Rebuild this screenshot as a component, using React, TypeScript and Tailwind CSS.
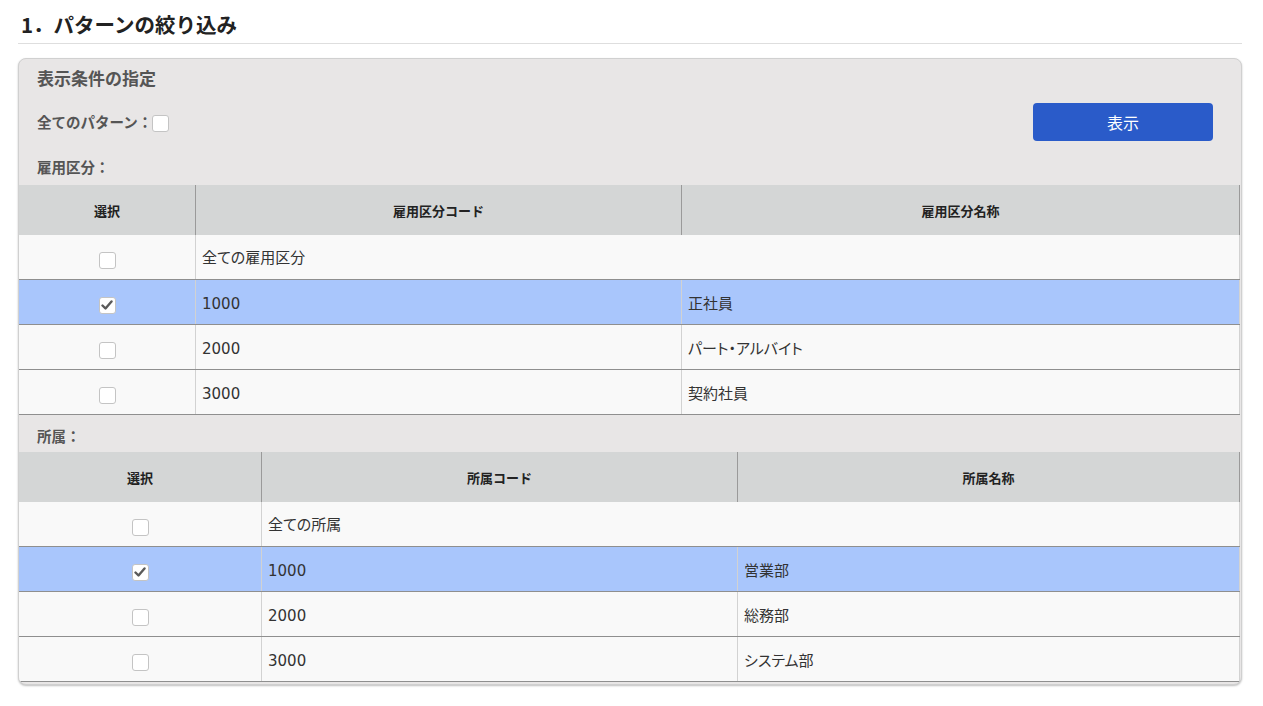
import React from "react";

const font = { fontFamily: '"Noto Sans CJK JP", "Noto Sans", sans-serif' };
const cellFont = { fontFamily: '"DejaVu Sans", "Noto Sans CJK JP", sans-serif' };

function Checkbox({ checked }: { checked?: boolean }) {
  return (
    <span className="inline-flex h-[17px] w-[17px] items-center justify-center rounded-[3px] border border-[#c4c4c4] bg-white">
      {checked && (
        <svg width="12" height="10" viewBox="0 0 12 10">
          <path d="M1.5 5.5 L4.5 8.5 L10.5 1.5" fill="none" stroke="#5a5a5a" strokeWidth="2.4" strokeLinejoin="round" strokeLinecap="round" />
        </svg>
      )}
    </span>
  );
}

type Row = { code: string; name: string; checked?: boolean; all?: boolean };

function DataTable({
  cols,
  headers,
  rows,
}: {
  cols: string;
  headers: string[];
  rows: Row[];
}) {
  return (
    <div className="mr-[1px]">
      <div className={`grid ${cols} h-[50px] bg-[#d4d6d6]`}>
        {headers.map((h, i) => (
          <div
            key={i}
            className={`flex items-center justify-center pt-[1px] text-[13px] font-bold text-[#222] ${
              i > 0 ? "border-l border-[#9a9a9a]" : ""
            } ${i === headers.length - 1 ? "border-r border-[#9a9a9a]" : ""}`}
          >
            {h}
          </div>
        ))}
      </div>
      {rows.map((r, i) => (
        <div
          key={i}
          className={`grid ${cols} h-[45px] border-b border-[#8f8f8f] ${
            r.checked ? "bg-[#a9c6fc]" : "bg-[#f9f9f9]"
          }`}
        >
          <div className="flex items-center justify-center pt-[6px]">
            <Checkbox checked={r.checked} />
          </div>
          {r.all ? (
            <div
              className="col-span-2 flex items-center border-l border-r border-[#d2d2d2] pl-[6px] pt-[3px] text-[15px] text-[#333] [font-feature-settings:'palt']"
              style={cellFont}
            >
              {r.code}
            </div>
          ) : (
            <>
              <div
                className="flex items-center border-l border-[#d2d2d2] pl-[6px] pt-[5px] text-[15px] text-[#333]"
                style={cellFont}
              >
                {r.code}
              </div>
              <div
                className="flex items-center border-l border-r border-[#d2d2d2] pl-[6px] pt-[4px] text-[15px] text-[#333] [font-feature-settings:'palt']"
                style={cellFont}
              >
                {r.name}
              </div>
            </>
          )}
        </div>
      ))}
    </div>
  );
}

export default function App() {
  return (
    <div className="min-h-[706px] w-[1263px] bg-white" style={font}>
      <div className="w-[1242px] pl-[18px]">
        <div className="flex h-[44px] items-center border-b border-[#dedede] pl-[3px] pt-[6px]">
          <h1 className="text-[20.5px] font-bold text-[#222]">1．パターンの絞り込み</h1>
        </div>
        <div className="mt-[14px] overflow-hidden rounded-[8px] border border-[#d0d0d0] bg-[#e8e6e6] pb-[2px] shadow-[0_1px_2px_rgba(0,0,0,0.25)]">
          <div className="flex h-[37px] items-center pl-[18px] text-[17px] font-bold text-[#555]">
            表示条件の指定
          </div>
          <div className="mt-[7px] flex h-[38px] items-center justify-between">
            <div className="flex items-center pl-[18px] text-[14.5px] font-bold text-[#555]">
              全てのパターン：
              <span className="mt-[2px] inline-flex">
                <Checkbox />
              </span>
            </div>
            <button className="mr-[28px] h-[38px] w-[180px] rounded-[4px] bg-[#2a5bc9] text-[16px] text-white">
              表示
            </button>
          </div>
          <div className="flex h-[44px] items-center pl-[18px] pt-[8px] text-[14.5px] font-bold text-[#555]">
            雇用区分：
          </div>
          <DataTable
            cols="grid-cols-[176px_486px_1fr]"
            headers={["選択", "雇用区分コード", "雇用区分名称"]}
            rows={[
              { code: "全ての雇用区分", name: "", all: true },
              { code: "1000", name: "正社員", checked: true },
              { code: "2000", name: "パート・アルバイト" },
              { code: "3000", name: "契約社員" },
            ]}
          />
          <div className="flex h-[37px] items-center pl-[18px] pt-[4px] text-[14.5px] font-bold text-[#555]">
            所属：
          </div>
          <DataTable
            cols="grid-cols-[242px_476px_1fr]"
            headers={["選択", "所属コード", "所属名称"]}
            rows={[
              { code: "全ての所属", name: "", all: true },
              { code: "1000", name: "営業部", checked: true },
              { code: "2000", name: "総務部" },
              { code: "3000", name: "システム部" },
            ]}
          />
        </div>
      </div>
    </div>
  );
}
